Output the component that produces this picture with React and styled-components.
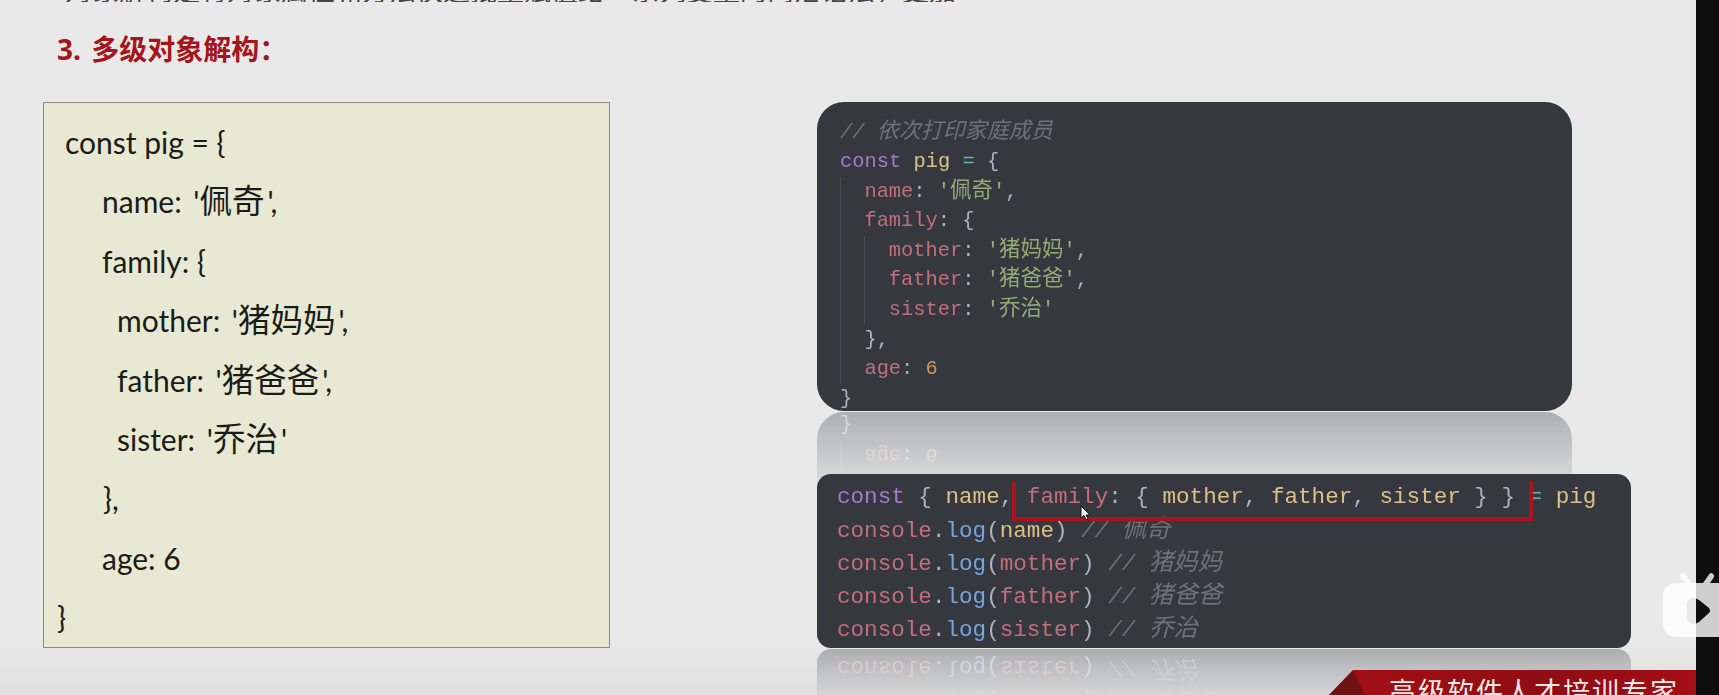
import styled, { createGlobalStyle } from "styled-components";

const GlobalStyle = createGlobalStyle`
  html, body {
    margin: 0;
    padding: 0;
    background: #0e0e0e;
    overflow: hidden;
  }
`;

const MONO = `"Liberation Mono", "Noto Sans CJK SC", monospace`;
const CJK = `"Noto Sans CJK SC", sans-serif`;

const Screen = styled.div`
  position: relative;
  display: flex;
  width: 1719px;
  height: 695px;
  overflow: hidden;
`;
const Slide = styled.div`
  position: relative;
  width: 1696px;
  height: 695px;
  overflow: hidden;
  padding-left: 43px;
  box-sizing: border-box;
  background: linear-gradient(#e9e9e9 0, #e9e9e9 640px, #dfdfdf 695px);
`;
const BlackStrip = styled.div`
  width: 23px;
  background: #0e0e0e;
`;
const CutLine = styled.div`
  height: 2px;
  overflow: hidden;
  display: flex;
  align-items: flex-end;
  padding-left: 22px;
  font-family: ${CJK};
  font-size: 27px;
  line-height: 24px;
  white-space: nowrap;
  color: #444;
`;
const Title = styled.h2`
  margin: 27px 0 33px 14px;
  font-family: "Noto Sans", ${CJK};
  font-size: 28px;
  line-height: 40px;
  font-weight: 700;
  word-spacing: 3px;
  color: #a5161c;
`;
const Content = styled.div`
  display: flex;
  gap: 207px;
  align-items: flex-start;
`;
const PlainBox = styled.div`
  width: 567px;
  height: 546px;
  box-sizing: border-box;
  padding-top: 10px;
  background: #e8e9d3;
  border: 1px solid #8a8c80;
  font-family: Lato, ${CJK};
  font-size: 30px;
  line-height: 59.4px;
  color: #1b1b18;
`;
const PlainLine = styled.div`
  padding-left: ${(p) => p.$indent}px;
  white-space: pre;
`;
const Quoted = styled.span`
  margin-left: 4px;
`;
const PlainCjk = styled.span`
  font-size: 32.5px;
  line-height: 0;
  margin-right: 3px;
`;
const RightColumn = styled.div`
  display: flex;
  flex-direction: column;
  gap: 63px;
`;
const DarkPanel = styled.div`
  position: relative;
  box-sizing: border-box;
  background: #35383f;
  font-family: ${MONO};
  white-space: pre;
  color: #abb2bf;
  -webkit-box-reflect: below 1px linear-gradient(transparent ${(p) => p.$fade}%, rgba(255, 255, 255, 0.32));
`;
const FamilyPanel = styled(DarkPanel)`
  width: 755px;
  height: 309px;
  padding: 15.5px 0 0 23px;
  border-radius: 27px;
  font-size: 20.4px;
  line-height: 29.6px;
`;
const ConsolePanel = styled(DarkPanel)`
  width: 814px;
  height: 174px;
  padding: 6.5px 0 0 20px;
  border-radius: 14px;
  font-size: 22.6px;
  line-height: 32.8px;
`;
const ConsoleHead = styled.div`
  margin-bottom: 2px;
`;
const GuideBlock = styled.div`
  border-left: 1px solid #494c54;
  padding-left: 23.4px;
`;
const Keyword = styled.span`
  color: #a57bc5;
`;
const Variable = styled.span`
  color: #dcc088;
`;
const Operator = styled.span`
  color: #5fb3bd;
`;
const Prop = styled.span`
  color: #c26f78;
`;
const Str = styled.span`
  color: #93ac76;
`;
const Num = styled.span`
  color: #c99764;
`;
const Method = styled.span`
  color: #76a6dc;
`;
const Comment = styled.span`
  color: #6d717a;
  font-style: italic;
`;
const CodeCjk = styled.span`
  font-size: ${(p) => p.$size}px;
  line-height: 0;
`;
const RedFrame = styled.div`
  position: absolute;
  left: 195px;
  top: 8px;
  width: 521px;
  height: 39px;
  box-sizing: border-box;
  border: 4px solid #a8131c;
  border-top: none;
`;
const Pointer = styled.svg`
  position: absolute;
  left: 263px;
  top: 31px;
`;
const Banner = styled.div`
  position: absolute;
  right: 0;
  top: 670px;
  width: 367px;
  height: 25px;
  overflow: hidden;
  background: linear-gradient(90deg, #a50f16, #8f0d13 60%, #a30f15);
  clip-path: polygon(24px 0, 100% 0, 100% 100%, 0 100%);
`;
const BannerFold = styled.div`
  position: absolute;
  left: 0;
  top: 0;
  width: 36px;
  height: 25px;
  background: #6e1216;
  clip-path: polygon(24px 0, 36px 100%, 0 100%);
`;
const BannerText = styled.div`
  position: absolute;
  left: 60px;
  top: 3px;
  font-family: ${CJK};
  font-size: 27px;
  line-height: 36px;
  letter-spacing: 2px;
  white-space: nowrap;
  color: #f4e9e9;
`;
const TvBadge = styled.svg`
  position: absolute;
  left: 1663px;
  top: 572px;
`;

function Z({ children, size }) {
  return <CodeCjk $size={size}>{children}</CodeCjk>;
}

const ConsoleLine = ({ arg, note, yellow }) => (
  <div>
    <Prop>console</Prop>.<Method>log</Method>(
    {yellow ? <Variable>{arg}</Variable> : <Prop>{arg}</Prop>}){" "}
    <Comment>
      // <Z size={24.4}>{note}</Z>
    </Comment>
  </div>
);

export default function App() {
  return (
    <Screen>
      <GlobalStyle />
      <Slide>
        <CutLine>对象解构是将对象属性和方法快速批量赋值给一系列变量的简洁语法，更加</CutLine>
        <Title>3. 多级对象解构：</Title>
        <Content>
          <PlainBox>
            <PlainLine $indent={21}>const pig = {"{"}</PlainLine>
            <PlainLine $indent={58}>name:<Quoted> '<PlainCjk>佩奇</PlainCjk>',</Quoted></PlainLine>
            <PlainLine $indent={58}>family: {"{"}</PlainLine>
            <PlainLine $indent={73}>mother:<Quoted> '<PlainCjk>猪妈妈</PlainCjk>',</Quoted></PlainLine>
            <PlainLine $indent={73}>father:<Quoted> '<PlainCjk>猪爸爸</PlainCjk>',</Quoted></PlainLine>
            <PlainLine $indent={73}>sister:<Quoted> '<PlainCjk>乔治</PlainCjk>'</Quoted></PlainLine>
            <PlainLine $indent={59}>{"},"}</PlainLine>
            <PlainLine $indent={58}>age: 6</PlainLine>
            <PlainLine $indent={13}>{"}"}</PlainLine>
          </PlainBox>
          <RightColumn>
            <FamilyPanel $fade={70}>
              <div>
                <Comment>
                  // <Z size={22}>依次打印家庭成员</Z>
                </Comment>
              </div>
              <div>
                <Keyword>const</Keyword> <Variable>pig</Variable> <Operator>=</Operator> {"{"}
              </div>
              <GuideBlock>
                <div>
                  <Prop>name</Prop>: <Str>'<Z size={21.5}>佩奇</Z>'</Str>,
                </div>
                <div>
                  <Prop>family</Prop>: {"{"}
                </div>
                <GuideBlock>
                  <div>
                    <Prop>mother</Prop>: <Str>'<Z size={21.5}>猪妈妈</Z>'</Str>,
                  </div>
                  <div>
                    <Prop>father</Prop>: <Str>'<Z size={21.5}>猪爸爸</Z>'</Str>,
                  </div>
                  <div>
                    <Prop>sister</Prop>: <Str>'<Z size={21.5}>乔治</Z>'</Str>
                  </div>
                </GuideBlock>
                <div>{"},"}</div>
                <div>
                  <Prop>age</Prop>: <Num>6</Num>
                </div>
              </GuideBlock>
              <div>{"}"}</div>
            </FamilyPanel>
            <ConsolePanel $fade={68}>
              <ConsoleHead>
                <Keyword>const</Keyword> {"{ "}
                <Variable>name</Variable>, <Prop>family</Prop>: {"{ "}
                <Variable>mother</Variable>, <Variable>father</Variable>, <Variable>sister</Variable>
                {" } } "}
                <Operator>=</Operator> <Variable>pig</Variable>
              </ConsoleHead>
              <ConsoleLine arg="name" note="佩奇" yellow />
              <ConsoleLine arg="mother" note="猪妈妈" />
              <ConsoleLine arg="father" note="猪爸爸" />
              <ConsoleLine arg="sister" note="乔治" />
              <RedFrame />
              <Pointer width="11" height="16" viewBox="0 0 11 16">
                <path d="M1 1 L1 13 L4 10.5 L6 15 L8 14 L6 10 L10 10 Z" fill="#f5f5f5" stroke="#111" strokeWidth="1" />
              </Pointer>
            </ConsolePanel>
          </RightColumn>
        </Content>
        <Banner>
          <BannerFold />
          <BannerText>高级软件人才培训专家</BannerText>
        </Banner>
      </Slide>
      <BlackStrip />
      <TvBadge width="56" height="70" viewBox="0 0 56 70">
        <g fill="#fff" fillOpacity="0.8">
          <path
            fillRule="evenodd"
            d="M14 11 H70 V65 H14 Q0 65 0 51 V25 Q0 11 14 11 Z M24 33 V45 Q24 52 30 52 Q33 52 36 50 L46 41 Q48 39 46 36 L36 28 Q33 26 30 26 Q24 26 24 33 Z"
          />
          <path d="M17.5 2 Q20 0 22 2.5 L29 11 H22 L17 5 Q16.5 3 17.5 2 Z" />
          <path d="M50 2 Q48 0 46 2.5 L40 11 H47 L51 5 Q51.5 3 50 2 Z" />
        </g>
      </TvBadge>
    </Screen>
  );
}
